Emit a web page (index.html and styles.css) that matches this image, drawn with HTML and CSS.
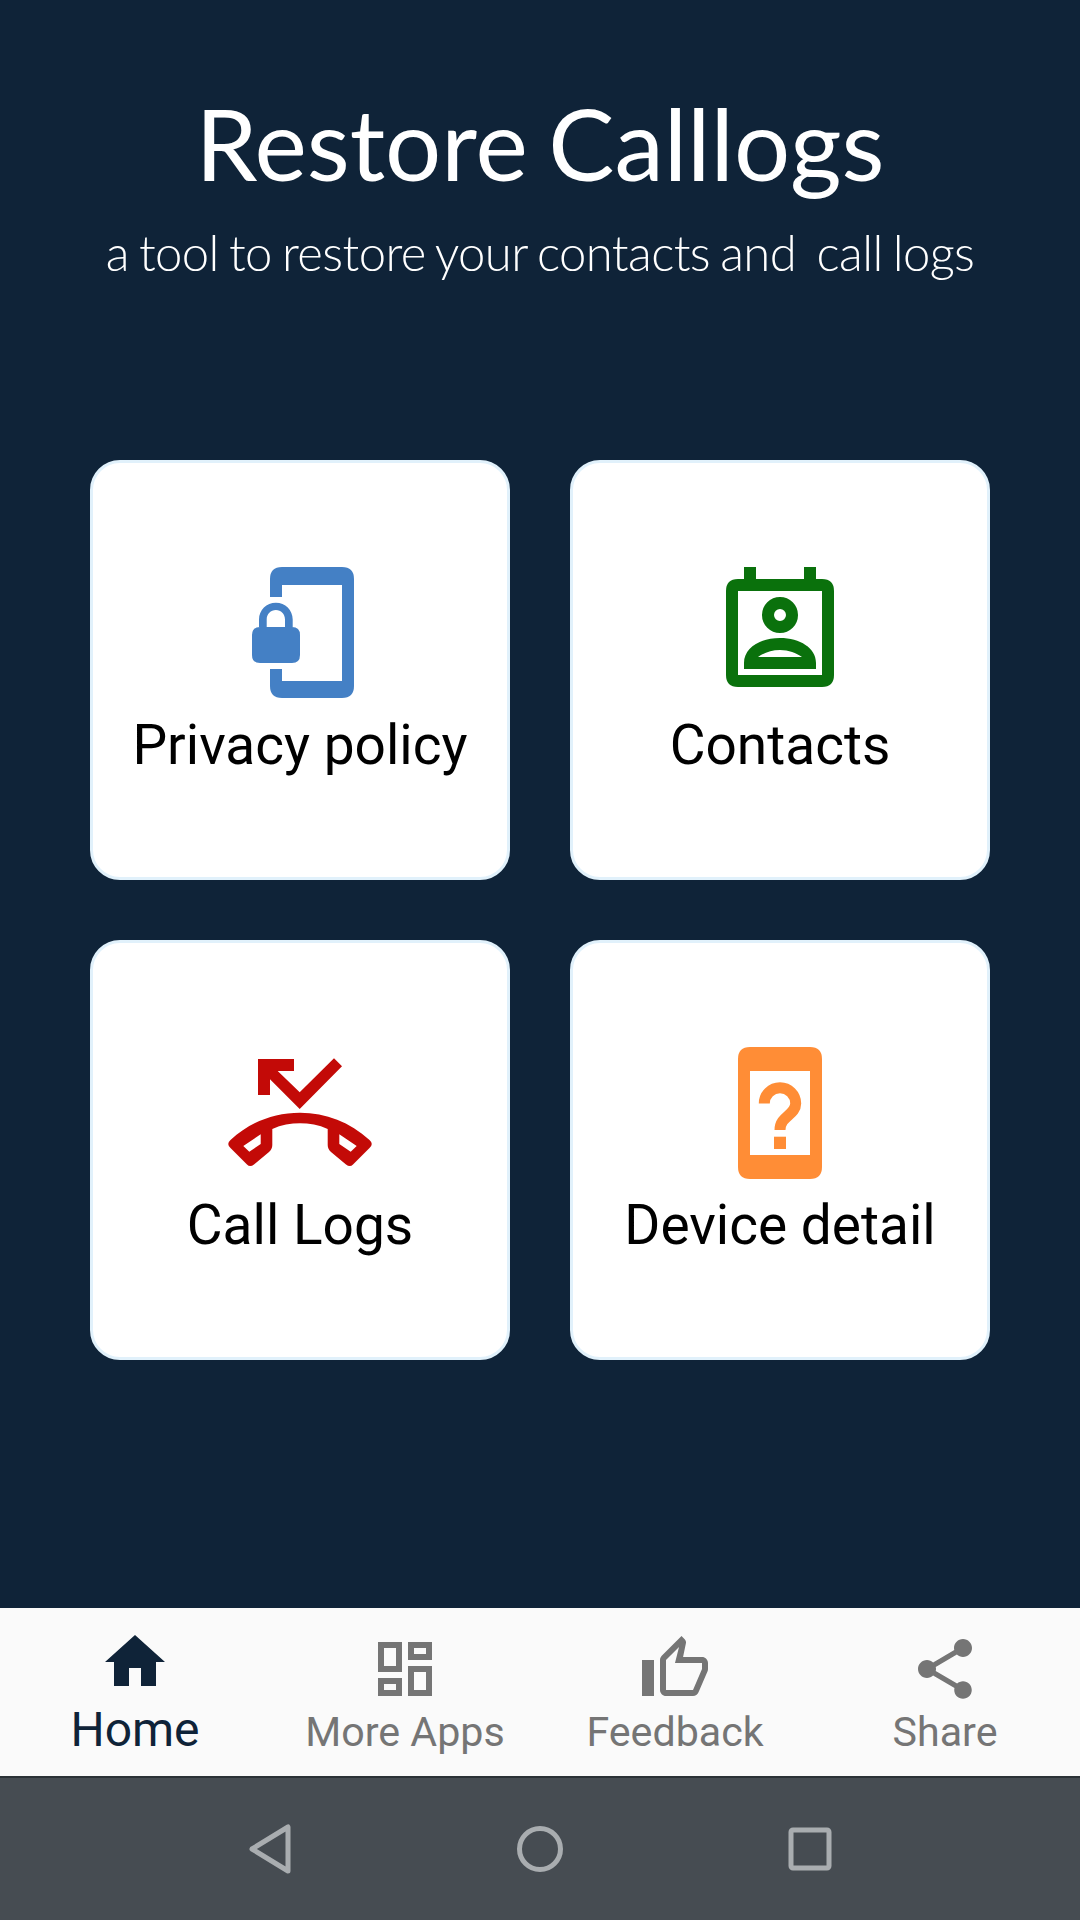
FILE: index.html
```html
<!DOCTYPE html>
<html lang="en">
<head>
<meta charset="utf-8">
<title>Restore Calllogs</title>
<link rel="stylesheet" href="styles.css">
</head>
<body>
<div class="screen">
  <main class="main">
    <header class="header">
      <h1 class="title">Restore Calllogs</h1>
      <p class="subtitle">a tool to restore your contacts and&nbsp; call logs</p>
    </header>
    <section class="grid">
      <div class="card">
        <svg class="card-icon" viewBox="0 0 144 144"><path fill="#4480c5" fill-rule="evenodd" d="M54 9H114Q126 9 126 21V128Q126 140 114 140H54Q42 140 42 128V111H54V123H114V27H54V39H42V21Q42 9 54 9Z"/><path fill="#4480c5" fill-rule="evenodd" d="M31 69V61.5C31 52 38.5 44.7 47.9 44.7S64.700 52 64.700 61.500V69H64Q72 69 72 77V97Q72 105 64 105H32Q24 105 24 97V77Q24 69 32 69ZM38.700 69H57V61.500C57 56 53 52 47.900 52S38.700 56 38.700 61.500Z"/></svg>
        <span class="card-label">Privacy policy</span>
      </div>
      <div class="card">
        <svg class="card-icon" viewBox="0 0 144 144"><path fill="#0a710c" fill-rule="evenodd" d="M36 9H48V21H96V9H108V21H114Q126 21 126 33V117Q126 129 114 129H30Q18 129 18 117V33Q18 21 30 21H36ZM30 33V117H114V33Z"/><path fill="#0a710c" fill-rule="evenodd" d="M72 39A18 18 0 1 1 72 75A18 18 0 1 1 72 39ZM72 51A6 6 0 1 0 72 63A6 6 0 1 0 72 51Z"/><path fill="#0a710c" fill-rule="evenodd" d="M36 111V105C36 90 52 80 72 80S108 90 108 105V111ZM50 99H94C88 95 81 92 72 92S56 95 50 99Z"/></svg>
        <span class="card-label">Contacts</span>
      </div>
      <div class="card">
        <svg class="card-icon" viewBox="0 0 144 144"><path fill="#c30a07" d="M30 21H66V33H49.700L71.700 54.300L106 20.300L114 28.300L71.700 71L42 41.300V57H30Z"/><path fill="#c30a07" fill-rule="evenodd" d="M2.500 102C22 84 46 74.700 72 74.700C98 74.700 122 84 141.500 102Q146 106 141.500 110L125 126.500Q122 129.500 118 126.500L103 114Q99.700 111 99.700 107V91C91 87 81 85.300 72 85.300C63 85.300 53 87 44.300 91V107Q44.300 111 41 114L26 126.500Q22 129.500 19 126.500L2.500 110Q-2 106 2.500 102ZM32.700 96.300L15.300 108L21.300 113.700L32.700 106ZM111.300 96.300V106L122.700 113.700L128.700 108Z"/></svg>
        <span class="card-label">Call Logs</span>
      </div>
      <div class="card">
        <svg class="card-icon" viewBox="0 0 144 144"><path fill="#ff8d36" fill-rule="evenodd" d="M42 9H102Q114 9 114 21V129Q114 141 102 141H42Q30 141 30 129V21Q30 9 42 9ZM42 33V117H102V33Z"/><path fill="none" stroke="#ff8d36" stroke-width="11" d="M56.300 65.500A15.700 15.700 0 0 1 87.700 65.500C87.700 77 72 78 72 92"/><rect fill="#ff8d36" x="66" y="98.700" width="12" height="12.300"/></svg>
        <span class="card-label">Device detail</span>
      </div>
    </section>
  </main>
  <nav class="tabs">
    <div class="tab tab-active">
      <svg class="tab-icon" viewBox="0 0 24 24"><path d="M10 20v-6h4v6h5v-8h3L12 3 2 12h3v8z"/></svg>
      <span class="tab-label">Home</span>
    </div>
    <div class="tab">
      <svg class="tab-icon" viewBox="0 0 24 24"><path d="M19 5v2h-4V5h4M9 5v6H5V5h4m10 8v6h-4v-6h4M9 17v2H5v-2h4M21 3h-8v6h8V3zM11 3H3v10h8V3zm10 8h-8v10h8V11zm-10 4H3v6h8v-6z"/></svg>
      <span class="tab-label">More Apps</span>
    </div>
    <div class="tab">
      <svg class="tab-icon" viewBox="0 0 24 24"><path d="M9 21h9c.83 0 1.540-.5 1.840-1.220l3.020-7.050c.09-.23.14-.47.14-.73v-2c0-1.100-.9-2-2-2h-6.310l.95-4.570.03-.32c0-.41-.17-.79-.44-1.060L14.170 1 7.580 7.590C7.220 7.950 7 8.450 7 9v10c0 1.100.9 2 2 2zM9 9l4.340-4.340L12 10h9v2l-3 7H9V9zM1 9h4v12H1z"/></svg>
      <span class="tab-label">Feedback</span>
    </div>
    <div class="tab">
      <svg class="tab-icon" viewBox="0 0 24 24"><path d="M18 16.080c-.76 0-1.440.3-1.960.77L8.910 12.700c.05-.23.09-.46.09-.7s-.04-.47-.09-.7l7.050-4.110c.54.5 1.250.81 2.040.81 1.660 0 3-1.340 3-3s-1.340-3-3-3-3 1.340-3 3c0 .24.04.47.09.7L8.040 9.810C7.500 9.310 6.790 9 6 9c-1.660 0-3 1.340-3 3s1.340 3 3 3c.79 0 1.500-.31 2.040-.81l7.120 4.160c-.05.21-.08.43-.08.65 0 1.610 1.310 2.920 2.920 2.920s2.920-1.310 2.920-2.920-1.310-2.920-2.920-2.920z"/></svg>
      <span class="tab-label">Share</span>
    </div>
  </nav>
  <footer class="sysbar">
    <svg class="sys-icon" viewBox="0 0 48 56"><path d="M42 6V50L6 28Z" fill="none" stroke="#a9adb0" stroke-width="5" stroke-linejoin="round"/></svg>
    <svg class="sys-icon" viewBox="0 0 48 56"><circle cx="24" cy="28" r="20.500" fill="none" stroke="#a9adb0" stroke-width="5"/></svg>
    <svg class="sys-icon" viewBox="0 0 48 56"><rect x="5" y="9" width="38" height="38" rx="2" fill="none" stroke="#a9adb0" stroke-width="5"/></svg>
  </footer>
</div>
</body>
</html>
```
FILE: styles.css
```css
* { box-sizing: border-box; }
html, body { margin: 0; padding: 0; }
body { width: 1080px; height: 1920px; overflow: hidden; font-family: Roboto, sans-serif; }
.screen { display: flex; flex-direction: column; width: 1080px; height: 1920px; }
.main { flex: 1; min-height: 0; background: #0f2338; }
.header { display: flex; flex-direction: column; align-items: center; padding-top: 87px; color: #fff; font-family: Lato, sans-serif; }
.title { margin: 0; font-size: 99.2px; line-height: 112px; font-weight: 400; word-spacing: -5px; }
.subtitle { margin: 25px 0 0; font-size: 49px; line-height: 56px; font-weight: 300; letter-spacing: -0.6px; word-spacing: -2.5px; }
.grid { display: grid; grid-template-columns: 420px 420px; gap: 60px; justify-content: center; margin-top: 180px; }
.card { display: flex; flex-direction: column; align-items: center; height: 420px; padding-top: 95px; background: #fff; border: 3px solid #e1f1fb; border-radius: 30px; }
.card-icon { width: 144px; height: 144px; flex: none; }
.card-label { margin-top: 3px; height: 80px; font-size: 55px; line-height: 80px; color: #000; }
.tabs { display: grid; grid-template-columns: repeat(4, 270px); flex: none; height: 170px; background: #fafafa; border-bottom: 2px solid #2b3236; }
.tab { display: flex; flex-direction: column; align-items: center; padding-top: 25px; color: #757575; fill: #757575; }
.tab-active { padding-top: 18px; color: #0f2338; fill: #0f2338; }
.tab-icon { width: 72px; height: 72px; flex: none; }
.tab-label { margin-top: 2px; font-size: 41.2px; line-height: 50px; }
.tab-active .tab-label { margin-top: 4px; font-size: 48px; line-height: 56px; }
.sysbar { display: grid; grid-template-columns: repeat(3, 270px); justify-content: center; align-items: center; justify-items: center; flex: none; height: 142px; background: #464c52; }
.sys-icon { width: 48px; height: 56px; }
```
